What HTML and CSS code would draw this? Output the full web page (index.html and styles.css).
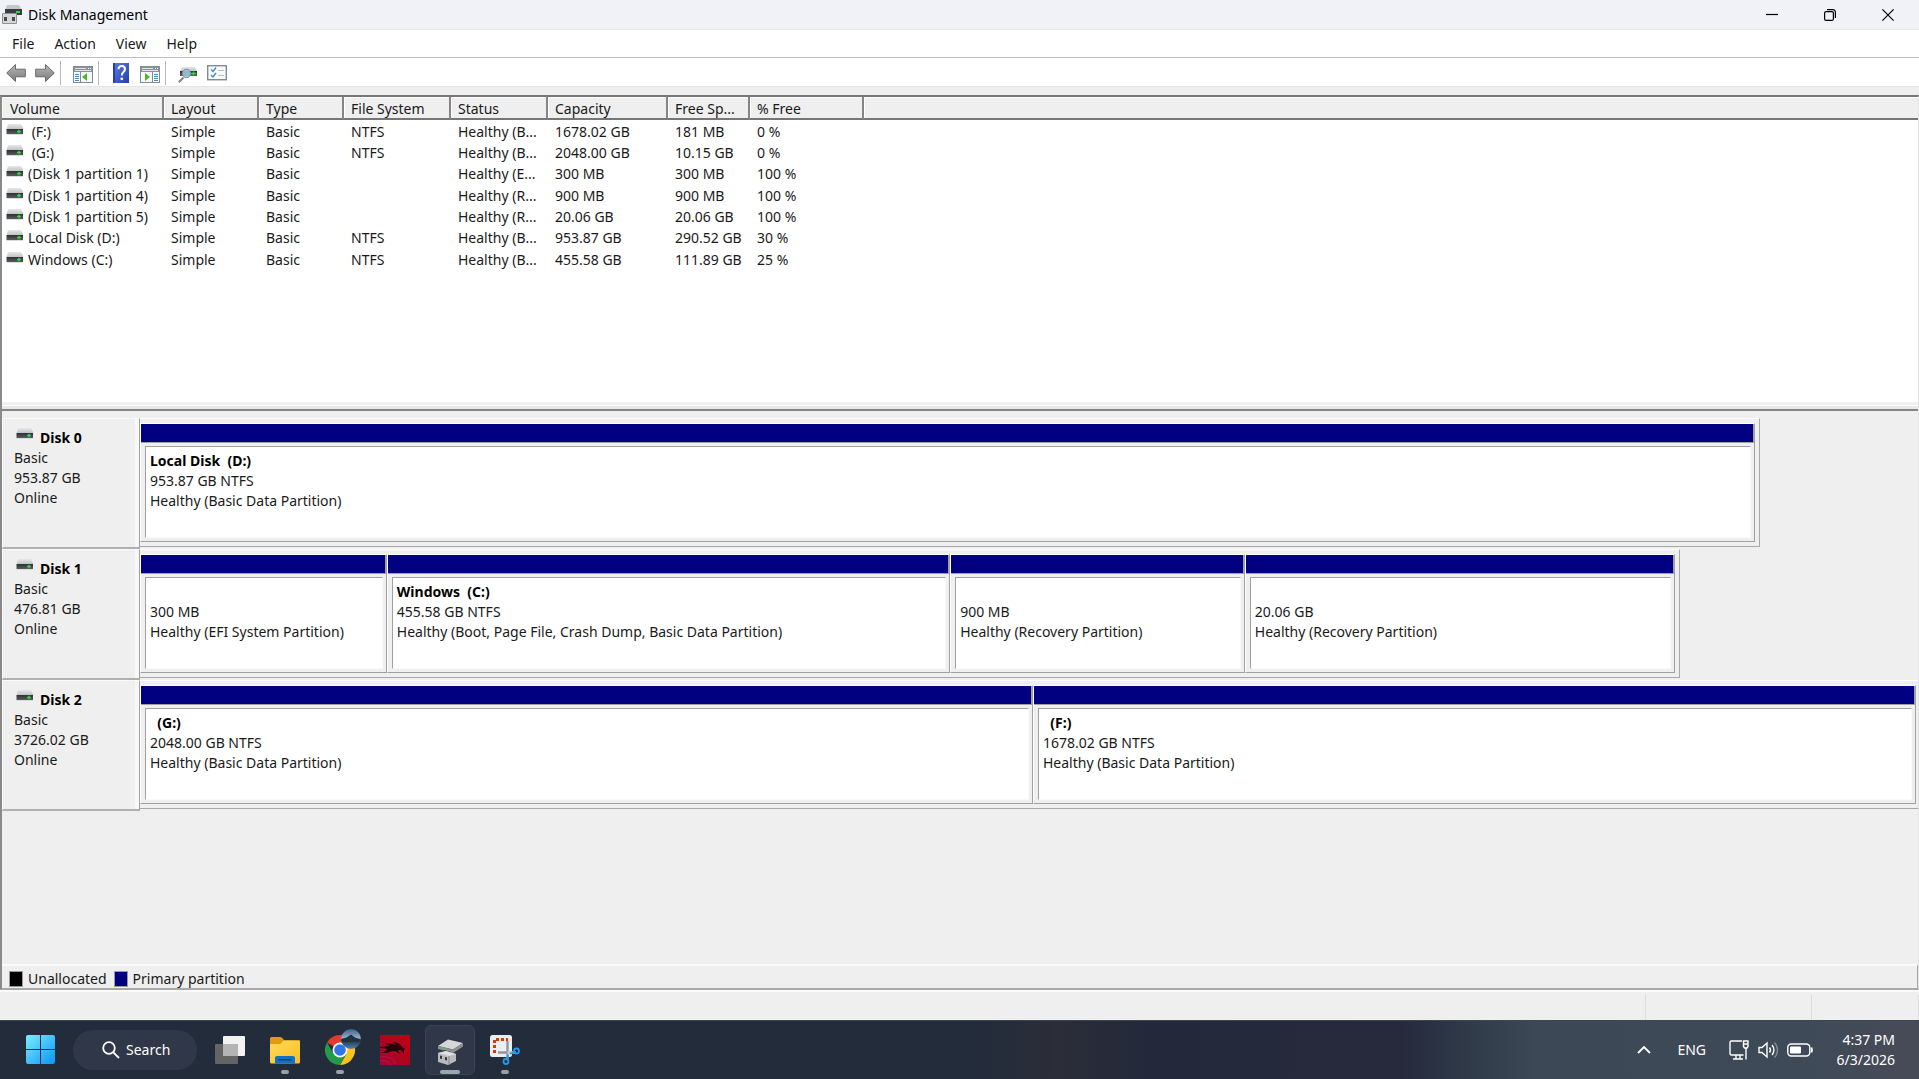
FILE: index.html
```
<!DOCTYPE html>
<html lang="en">
<head>
<meta charset="utf-8">
<title>Disk Management</title>
<link rel="stylesheet" href="styles.css">
</head>
<body>
<svg class="defs" aria-hidden="true">
  <defs>
    <linearGradient id="lid" x1="0" y1="0" x2="0" y2="1"><stop offset="0" stop-color="#e6e8ea"/><stop offset="1" stop-color="#c0c3c7"/></linearGradient>
    <linearGradient id="face" x1="0" y1="0" x2="0" y2="1"><stop offset="0" stop-color="#2e3133"/><stop offset="1" stop-color="#5a5d60"/></linearGradient>
    <linearGradient id="arrow" x1="0" y1="0" x2="0" y2="1"><stop offset="0" stop-color="#b5b5b5"/><stop offset="1" stop-color="#7c7c7c"/></linearGradient>
    <linearGradient id="help" x1="0" y1="0" x2="1" y2="1"><stop offset="0" stop-color="#5a7ee0"/><stop offset="1" stop-color="#2540a8"/></linearGradient>
    <linearGradient id="win" x1="0" y1="0" x2="1" y2="1"><stop offset="0" stop-color="#7cecff"/><stop offset="1" stop-color="#0a95f8"/></linearGradient>
    <linearGradient id="folder" x1="0" y1="0" x2="1" y2="1"><stop offset="0" stop-color="#ffd95a"/><stop offset="1" stop-color="#f9bf24"/></linearGradient>
    <linearGradient id="red" x1="0" y1="1" x2="1" y2="0"><stop offset="0" stop-color="#9c0840"/><stop offset=".5" stop-color="#b0041c"/><stop offset="1" stop-color="#c40012"/></linearGradient>
    <linearGradient id="sky" x1="0" y1="0" x2="0" y2="1"><stop offset="0" stop-color="#3f5f88"/><stop offset=".45" stop-color="#8fb0cc"/><stop offset=".55" stop-color="#1c3340"/><stop offset="1" stop-color="#587fae"/></linearGradient>
    <symbol id="drive" viewBox="0 0 18 11">
      <path d="M2 0h13l2.500 5H.5z" fill="url(#lid)"/>
      <rect x=".5" y="5" width="16.500" height="5" fill="url(#face)"/>
      <path d="M.5 10h16.500v1H.5z" fill="#d9dbdd"/>
      <path d="M11 7.500h4M13 5.800v3.400" stroke="#35d43c" stroke-width="1.400"/>
    </symbol>
  </defs>
</svg>

<header class="titlebar">
  <svg class="app-icon" viewBox="0 0 20 20" aria-hidden="true">
    <path d="M5 0h12l3 5H3z" fill="#c5c8cb"/><rect x="3" y="4" width="17" height="6" fill="#3a3d40"/><path d="M14 7h4" stroke="#35d43c" stroke-width="2"/>
    <rect x="0" y="8" width="15" height="11" rx="1" fill="#8e9092"/><rect x="1" y="9" width="13" height="9" fill="#d5d6d7"/><path d="M2 12h3v4H2zM10 12h3v4h-3z" fill="#4b4c4d"/>
  </svg>
  <h1>Disk Management</h1>
  <div class="window-controls">
    <button type="button" aria-label="Minimize"><svg viewBox="0 0 12 12"><path d="M0 5.500h12"/></svg></button>
    <button type="button" aria-label="Restore"><svg viewBox="0 0 12 12"><rect x=".6" y="2.600" width="8.800" height="8.800" rx="1.500"/><path d="M3 .6h6a2.400 2.400 0 0 1 2.400 2.400v6"/></svg></button>
    <button type="button" aria-label="Close"><svg viewBox="0 0 12 12"><path d="M.4.4l11.200 11.200M11.600.4L.4 11.600"/></svg></button>
  </div>
</header>

<nav class="menubar">
  <button type="button">File</button>
  <button type="button">Action</button>
  <button type="button">View</button>
  <button type="button">Help</button>
</nav>

<div class="toolbar">
  <button type="button" aria-label="Back"><svg viewBox="0 0 20 20"><path d="M.7 10L9.500 1.500v4.700h9.800v7.600H9.500v4.700z" fill="url(#arrow)" stroke="#6a6a6a"/></svg></button>
  <button type="button" aria-label="Forward"><svg viewBox="0 0 20 20"><path d="M19.300 10L10.500 1.500v4.700H.7v7.600h9.800v4.700z" fill="url(#arrow)" stroke="#6a6a6a"/></svg></button>
  <span class="divider"></span>
  <button type="button" aria-label="Show console tree"><svg viewBox="0 0 20 20"><rect x=".5" y="3.500" width="19" height="16" fill="#f7f8f9" stroke="#848b93"/><path d="M1 4h18v5H1z" fill="#8a929b"/><path d="M2 5.500h11M2 7.500h16" stroke="#dfe3e7"/><path d="M15 5.500h3" stroke="#fff" stroke-dasharray="1 1"/><path d="M2 11.500h4M2 13.500h4M2 15.500h4M2 17.500h4" stroke="#4f86c0"/><path d="M7.500 9v10" stroke="#848b93"/><path d="M14 10v8l-5-4z" fill="#4db52c"/></svg></button>
  <span class="divider"></span>
  <button type="button" aria-label="Help topics"><svg viewBox="0 0 20 20"><rect x="2" width="16" height="20" fill="url(#help)"/><path d="M2 0h2v20H2z" fill="#2440a0"/><path d="M7.500 6.200C7.500 1.800 14 2 14 6.200c0 3-3.200 2.800-3.200 6.300" fill="none" stroke="#fff" stroke-width="2"/><circle cx="10.800" cy="15.800" r="1.400" fill="#fff"/></svg></button>
  <button type="button" aria-label="Show action pane"><svg viewBox="0 0 20 20"><rect x=".5" y="3.500" width="19" height="16" fill="#f7f8f9" stroke="#848b93"/><path d="M1 4h18v5H1z" fill="#8a929b"/><path d="M2 5.500h11M2 7.500h16" stroke="#dfe3e7"/><path d="M15 5.500h3" stroke="#fff" stroke-dasharray="1 1"/><path d="M14 11.500h4M14 13.500h4M14 15.500h4M14 17.500h4" stroke="#4f86c0"/><path d="M12.500 9v10" stroke="#848b93"/><path d="M5 10v8l5-4z" fill="#4db52c"/></svg></button>
  <span class="divider"></span>
  <button type="button" aria-label="Rescan disks"><svg viewBox="0 0 20 20"><path d="M4 4h13l2 4H2z" fill="url(#lid)"/><path d="M2 8h17v5H2z" fill="url(#face)"/><path d="M13 10.500h5M15.500 8.500v4" stroke="#35d43c" stroke-width="1.500"/><path d="M5.500 14.500L.8 19.200" stroke="#7d8791" stroke-width="2"/><circle cx="8.500" cy="10.500" r="4.200" fill="#9cc4dc" fill-opacity=".9" stroke="#6f8fa3"/></svg></button>
  <button type="button" aria-label="Settings"><svg viewBox="0 0 20 20"><rect x=".7" y="2.700" width="18.600" height="14" fill="#fafbfc" stroke="#828a92" stroke-width="1.400"/><path d="M4 6.500l2 2 3-4M4 12l2 2 3-4" fill="none" stroke="#3c8fd6" stroke-width="1.400"/><path d="M11 7.500h6M11 12.500h6" stroke="#b9bdc2"/></svg></button>
</div>

<main class="workspace">
  <section class="volumes">
    <table>
      <colgroup><col class="c-volume"><col class="c-layout"><col class="c-type"><col class="c-fs"><col class="c-status"><col class="c-capacity"><col class="c-free"><col class="c-percent"><col></colgroup>
      <thead><tr><th>Volume</th><th>Layout</th><th>Type</th><th>File System</th><th>Status</th><th>Capacity</th><th>Free Sp...</th><th>% Free</th><th></th></tr></thead>
      <tbody>
        <tr><td><svg class="drive"><use href="#drive"/></svg>&nbsp;(F:)</td><td>Simple</td><td>Basic</td><td>NTFS</td><td>Healthy (B...</td><td>1678.02 GB</td><td>181 MB</td><td>0 %</td><td></td></tr>
        <tr><td><svg class="drive"><use href="#drive"/></svg>&nbsp;(G:)</td><td>Simple</td><td>Basic</td><td>NTFS</td><td>Healthy (B...</td><td>2048.00 GB</td><td>10.15 GB</td><td>0 %</td><td></td></tr>
        <tr><td><svg class="drive"><use href="#drive"/></svg>(Disk 1 partition 1)</td><td>Simple</td><td>Basic</td><td></td><td>Healthy (E...</td><td>300 MB</td><td>300 MB</td><td>100 %</td><td></td></tr>
        <tr><td><svg class="drive"><use href="#drive"/></svg>(Disk 1 partition 4)</td><td>Simple</td><td>Basic</td><td></td><td>Healthy (R...</td><td>900 MB</td><td>900 MB</td><td>100 %</td><td></td></tr>
        <tr><td><svg class="drive"><use href="#drive"/></svg>(Disk 1 partition 5)</td><td>Simple</td><td>Basic</td><td></td><td>Healthy (R...</td><td>20.06 GB</td><td>20.06 GB</td><td>100 %</td><td></td></tr>
        <tr><td><svg class="drive"><use href="#drive"/></svg>Local Disk (D:)</td><td>Simple</td><td>Basic</td><td>NTFS</td><td>Healthy (B...</td><td>953.87 GB</td><td>290.52 GB</td><td>30 %</td><td></td></tr>
        <tr><td><svg class="drive"><use href="#drive"/></svg>Windows (C:)</td><td>Simple</td><td>Basic</td><td>NTFS</td><td>Healthy (B...</td><td>455.58 GB</td><td>111.89 GB</td><td>25 %</td><td></td></tr>
      </tbody>
    </table>
  </section>
  <div class="splitter"></div>

  <section class="disks">
    <article class="disk">
      <div class="disk-label"><h2><svg class="drive"><use href="#drive"/></svg>Disk 0</h2><p>Basic</p><p>953.87 GB</p><p>Online</p></div>
      <div class="map" style="width:91.1%">
        <div class="partition"><div class="bar"></div><div class="info"><h3>Local Disk &nbsp;(D:)</h3><p>953.87 GB NTFS</p><p>Healthy (Basic Data Partition)</p></div></div>
      </div>
    </article>
    <article class="disk">
      <div class="disk-label"><h2><svg class="drive"><use href="#drive"/></svg>Disk 1</h2><p>Basic</p><p>476.81 GB</p><p>Online</p></div>
      <div class="map" style="width:86.6%">
        <div class="partition" style="flex-grow:246"><div class="bar"></div><div class="info"><h3></h3><p>300 MB</p><p>Healthy (EFI System Partition)</p></div></div>
        <div class="partition" style="flex-grow:564"><div class="bar"></div><div class="info"><h3>Windows &nbsp;(C:)</h3><p>455.58 GB NTFS</p><p>Healthy (Boot, Page File, Crash Dump, Basic Data Partition)</p></div></div>
        <div class="partition" style="flex-grow:294"><div class="bar"></div><div class="info"><h3></h3><p>900 MB</p><p>Healthy (Recovery Partition)</p></div></div>
        <div class="partition" style="flex-grow:430"><div class="bar"></div><div class="info"><h3></h3><p>20.06 GB</p><p>Healthy (Recovery Partition)</p></div></div>
      </div>
    </article>
    <article class="disk">
      <div class="disk-label"><h2><svg class="drive"><use href="#drive"/></svg>Disk 2</h2><p>Basic</p><p>3726.02 GB</p><p>Online</p></div>
      <div class="map full">
        <div class="partition" style="flex-grow:893"><div class="bar"></div><div class="info"><h3>&nbsp; (G:)</h3><p>2048.00 GB NTFS</p><p>Healthy (Basic Data Partition)</p></div></div>
        <div class="partition" style="flex-grow:883"><div class="bar"></div><div class="info"><h3>&nbsp; (F:)</h3><p>1678.02 GB NTFS</p><p>Healthy (Basic Data Partition)</p></div></div>
      </div>
    </article>
  </section>

  <div class="legend">
    <span class="swatch unallocated"></span><span>Unallocated</span>
    <span class="swatch primary"></span><span>Primary partition</span>
  </div>
</main>

<div class="statusbar"><span></span><span></span><span></span></div>

<footer class="taskbar">
  <button type="button" class="start" aria-label="Start"><svg viewBox="0 0 30 30"><path d="M2 0h12v14H0V2a2 2 0 0 1 2-2zM15 0h12a2 2 0 0 1 2 2v12H15zM0 15h14v14H2a2 2 0 0 1-2-2zM15 15h14v12a2 2 0 0 1-2 2H15z" fill="url(#win)"/></svg></button>
  <button type="button" class="search"><svg viewBox="0 0 18 18"><circle cx="7" cy="7" r="5.800"/><path d="M11.300 11.300l5.700 5.700"/></svg>Search</button>
  <div class="apps">
    <button type="button" aria-label="Task view"><svg viewBox="0 0 30 30"><rect x="8" y="1" width="22" height="20" rx="1" fill="#f2f2f2"/><rect y="9" width="23" height="20" rx="1" fill="#646464"/><path d="M8 9h14a1 1 0 0 1 1 1v11H8z" fill="#b4b4b4"/></svg></button>
    <button type="button" class="running" aria-label="File Explorer"><svg viewBox="0 0 30 30"><path d="M0 3.500A1.500 1.500 0 0 1 1.500 2h8.700a3 3 0 0 1 2 1l2 2.200H30V12H0z" fill="#e09c0c"/><path d="M0 9h10.500l3-3.500h15A1.500 1.500 0 0 1 30 7v20a1.500 1.500 0 0 1-1.500 1.500h-27A1.500 1.500 0 0 1 0 27z" fill="url(#folder)"/><path d="M5 28.500V23a2 2 0 0 1 2-2h16a2 2 0 0 1 2 2v5.500z" fill="#0f72c4"/><path d="M8.500 24.800h13" stroke="#0a3f78" stroke-width="1.400"/></svg></button>
    <button type="button" class="running" aria-label="Google Chrome"><svg viewBox="0 0 30 30"><path d="M15 15L2 7.500A15 15 0 0 1 28 7.500H15z" fill="#e33b2e"/><path d="M15 15v-7.500h13A15 15 0 0 1 15 30l6.500-11.200z" fill="#fcc31e"/><path d="M2 7.500l6.500 11.300L15 22.500l6-3L15 30A15 15 0 0 1 2 7.500z" fill="#239a48"/><circle cx="15" cy="15" r="7.500" fill="#fff"/><circle cx="15" cy="15" r="5.800" fill="#2f74ea"/><circle cx="26" cy="4" r="10" fill="url(#sky)"/><path d="M16.500 4l5-1.500 4.500-3 4 3 5.500 2-2 2.500H19z" fill="#1d3440"/></svg></button>
    <button type="button" aria-label="Kali Linux"><svg viewBox="0 0 30 30"><path d="M0 0h30v30H0z" fill="url(#red)"/><path d="M0 12c4 0 6-2 10-1-2-2-4-2-6-2 5-1 9 0 12 1l-3-3c5 0 8 3 9 5l3 2-1 1 0 4-3-4-3 0 2 4-5-3c-4 0-6 1-8 2l-7 0c4-1 6-2 7-4-2-1-4-1-7-1z" fill="#25040c"/><path d="M0 22c8-1 13 1 16 7M0 26c6-1 9 1 11 4" fill="none" stroke="#d01038" stroke-width=".8"/></svg></button>
    <button type="button" class="running active" aria-label="Disk Management"><svg viewBox="0 0 30 30"><path d="M3 11L13 4.500 28 8 18 14.500z" fill="#d6d6d6"/><path d="M3 11v3l15 4 10-6.500V8l-10 6.500z" fill="#8d8f90"/><path d="M9 15l7 2v3l-7-2z" fill="#303230"/><circle cx="9" cy="13.500" r="1" fill="#35d43c"/><path d="M3 18l8-2 10 3v7l-8 4-10-3z" fill="#b9babb"/><path d="M3 18l8-2 10 3-7 2z" fill="#dedede"/><path d="M14 21v9" stroke="#8a8b8c"/><path d="M5 20.500l2 .5v3l-2-.5zM10 22l2 .5v3l-2-.5z" fill="#333"/></svg></button>
    <button type="button" class="running" aria-label="Snipping Tool"><svg viewBox="0 0 30 30"><rect width="22" height="22" rx="2.500" fill="#eceef3"/><path d="M4.500 18V4.500H18" fill="none" stroke="#d83b01" stroke-width="3" stroke-dasharray="3 2"/><path d="M17.500 6v18M8 17.500h18" stroke="#8f979e" stroke-width="2.400"/><path d="M17.500 17.500h5" stroke="#c4c9ce" stroke-width="3"/><circle cx="26.500" cy="16" r="2.500" fill="none" stroke="#1f9cf0" stroke-width="1.800"/><circle cx="16" cy="26.500" r="2.500" fill="none" stroke="#1f9cf0" stroke-width="1.800"/><path d="M20 19l5-2.500M17 24l1-4" stroke="#1f9cf0" stroke-width="1.800"/></svg></button>
  </div>
  <div class="tray">
    <button type="button" class="chevron" aria-label="Show hidden icons"><svg viewBox="0 0 14 20"><path d="M1 13l6-6 6 6" stroke-width="1.800"/></svg></button>
    <button type="button" class="lang">ENG</button>
    <button type="button" class="quick" aria-label="Network, volume and battery">
      <svg class="net" viewBox="0 0 20 20"><path d="M13 1H2.500A1.500 1.500 0 0 0 1 2.500v11A1.500 1.500 0 0 0 2.500 15h12M4 19h10M7 15v4M11 15v4M14.500 1h4.500v5.500l-1 1.500h-2.500l-1-1.500zM14.500 4h4.500M17 8v11.500"/></svg>
      <svg class="vol" viewBox="0 0 20 20"><path d="M1 7.500h3L9 3v14l-5-4.500H1z"/><path d="M11.500 7.500a4 4 0 0 1 0 5M14 5a7.500 7.500 0 0 1 0 10"/><path d="M16.500 2.500a11 11 0 0 1 0 15" opacity=".35"/></svg>
      <svg class="bat" viewBox="0 0 26 20"><rect x=".8" y="4" width="22" height="12" rx="3.500"/><path d="M24.500 7.500q1 2.500 0 5" stroke-width="1.800"/><rect x="3" y="6.500" width="11" height="7" rx="1" fill="#fff" stroke="none"/></svg>
    </button>
    <button type="button" class="clock"><span>4:37 PM</span><span>6/3/2026</span></button>
  </div>
</footer>
</body>
</html>
```
FILE: styles.css
```
* { box-sizing: border-box; }

body {
  margin: 0;
  min-height: 100vh;
  display: flex;
  flex-direction: column;
  background: #efefef;
  color: #1a1a1a;
  font: 14px/20px "Noto Sans", "Open Sans", sans-serif;
}

h1, h2, h3, p { margin: 0; font-size: 14px; }
h1 { font-weight: 400; }
svg { display: block; overflow: visible; }
.defs { position: absolute; width: 0; height: 0; }

button {
  padding: 0;
  border: 0;
  background: none;
  color: inherit;
  font: inherit;
}

/* Title bar */
.titlebar {
  display: flex;
  align-items: center;
  height: 30px;
  padding: 0 2px;
  border-bottom: 1px solid #e8e8ea;
  background: #f0f2f8;
}
.titlebar h1 { margin-left: 6px; color: #000; }
.app-icon { width: 20px; height: 20px; }
.window-controls { display: flex; margin-left: auto; }
.window-controls button {
  display: grid;
  place-items: center;
  width: 58px;
  height: 29px;
}
.window-controls svg {
  width: 12px;
  height: 12px;
  fill: none;
  stroke: #000;
  stroke-width: 1.2;
}

/* Menu and toolbar */
.menubar {
  display: flex;
  gap: 20px;
  height: 28px;
  padding: 0 12px;
  border-bottom: 1px solid #bfbfc2;
  background: #fff;
}
.toolbar {
  display: flex;
  align-items: center;
  height: 29px;
  padding: 2px 0 0 1px;
  border-bottom: 1px solid #e4e4e4;
  background: #fff;
}
.toolbar button {
  display: grid;
  place-items: center;
  width: 29px;
  height: 26px;
}
.toolbar svg { width: 20px; height: 20px; }
.divider {
  width: 1px;
  height: 24px;
  margin: 0 7px 0 1px;
  background: #b8b8b8;
}

/* Workspace */
.workspace {
  flex: 1;
  display: flex;
  flex-direction: column;
  margin-top: 8px;
  border-top: 2px solid #767676;
  border-left: 2px solid #8a8a8a;
  border-right: 1px solid #e3e3e3;
  border-bottom: 2px solid #a8a8a8;
}
.volumes { flex: 0 0 305px; background: #fff; }
table {
  width: 100%;
  table-layout: fixed;
  border-collapse: separate;
  border-spacing: 0;
}
.c-volume { width: 162px; }
.c-layout { width: 95px; }
.c-type { width: 85px; }
.c-fs { width: 107px; }
.c-status { width: 97px; }
.c-capacity { width: 120px; }
.c-free { width: 82px; }
.c-percent { width: 114px; }
th, td {
  padding: 0 0 0 7px;
  text-align: left;
  font-weight: 400;
  white-space: nowrap;
}
th {
  height: 23px;
  padding-top: 3px;
  line-height: 18px;
  border-right: 2px solid #858585;
  border-bottom: 2px solid #767676;
  background: #efefef;
  box-shadow: inset 1px 1px #fff;
}
th:first-child { padding-left: 8px; }
th:last-child { border-right: 0; }
td { height: 21px; line-height: 21px; }
tbody tr:nth-child(3n+1) td { height: 22px; }
td:first-child { padding-left: 4px; }
.drive { width: 18px; height: 11px; }
td .drive { float: left; margin: 3px 4px 0 0; }

.splitter {
  height: 9px;
  border-top: 3px solid #f0f0f0;
  border-bottom: 2px solid #858585;
  background: #e8e8e8;
  box-shadow: inset 0 1px #fff;
}

/* Disk map */
.disks { flex: 1; padding-top: 7px; }
.disk {
  display: grid;
  grid-template-columns: 138px 1fr;
  height: 131px;
}
.disk-label {
  height: 131px;
  padding: 9px 0 0 11px;
  border: 1px solid #fafafa;
  border-right: 1px solid #a0a0a0;
  border-bottom: 2px solid #b0b0b0;
  box-shadow: inset -4px 0 #f8f8f8;
}
.disk-label h2 {
  display: flex;
  gap: 6px;
  padding-left: 2px;
  color: #000;
}
.map {
  display: flex;
  height: 129px;
  padding: 4px 4px 4px 0;
  border-top: 1px solid #fff;
  border-right: 1px solid #a8a8a8;
  border-bottom: 1px solid #a8a8a8;
}
.map.full { padding-right: 2px; border-right: 0; }
.partition {
  flex: 1 1 0;
  min-width: 0;
  display: flex;
  flex-direction: column;
  border: 1px solid #fff;
  border-right: 1px solid #a0a0a0;
  border-bottom: 1px solid #a0a0a0;
}
.bar {
  height: 19px;
  border-right: 1px solid #a0a0a0;
  border-bottom: 1px solid #a0a0a0;
  background: #000080;
}
.info {
  flex: 1;
  margin: 3px 3px 3px 4px;
  padding: 4px 0 0 4px;
  overflow: hidden;
  border: 1px solid #a0a0a0;
  border-right-color: #fafafa;
  border-bottom-color: #fafafa;
  background: #fff;
  white-space: nowrap;
}
.info h3 { height: 20px; color: #000; }

/* Legend and status bar */
.legend {
  display: flex;
  align-items: center;
  height: 24px;
  padding: 3px 0 0 7px;
  border-top: 2px solid #fafafa;
  border-right: 1px solid #a8a8a8;
}
.swatch {
  width: 14px;
  height: 16px;
  margin-right: 5px;
  border: 1px solid #9a9a9a;
}
.unallocated { background: #000; }
.primary { margin-left: 7px; background: #000080; }
.statusbar {
  display: flex;
  height: 30px;
  padding-top: 3px;
  border-top: 2px solid #fafafa;
}
.statusbar span { border-right: 1px solid #dcdcdc; }
.statusbar span:nth-child(1) { flex: 1; }
.statusbar span:nth-child(2) { width: 166px; }
.statusbar span:nth-child(3) { width: 107px; }

/* Taskbar */
.taskbar {
  display: flex;
  align-items: center;
  height: 59px;
  padding: 0 24px 0 26px;
  border-top: 1px solid #3b4753;
  background: linear-gradient(90deg, #232c3b 0%, #232c3b 51%, #2b2d38 55%, #23293a 60%, #262a3c 73%, #2e3847 76%, #3c4855 80%, #3e4a58 94%, #484b57 100%);
  color: #fff;
}
.start svg { width: 30px; height: 30px; }
.search {
  display: flex;
  align-items: center;
  gap: 6px;
  width: 124px;
  height: 40px;
  margin-left: 17px;
  padding-left: 29px;
  border-radius: 20px;
  background: #303748;
}
.search svg {
  width: 18px;
  height: 18px;
  fill: none;
  stroke: #fff;
  stroke-width: 1.8;
}
.apps { display: flex; gap: 5px; margin-left: 8px; }
.apps button {
  position: relative;
  display: grid;
  place-items: center;
  width: 50px;
  height: 50px;
  border-radius: 6px;
}
.apps svg { width: 30px; height: 30px; }
.running::after {
  content: "";
  position: absolute;
  bottom: 1px;
  left: 21px;
  width: 8px;
  height: 4px;
  border-radius: 2px;
  background: #9a9fa8;
}
.apps .active {
  border: 1px solid #3b4252;
  background: #303748;
}
.active::after { bottom: 0; left: 14px; width: 20px; background: #98a9ad; }
.tray { display: flex; align-items: center; margin-left: auto; }
.tray svg {
  height: 20px;
  fill: none;
  stroke: #fff;
  stroke-width: 1.4;
}
.chevron svg { width: 14px; }
.lang { margin-left: 26px; }
.quick { display: flex; gap: 9px; width: 86px; margin-left: 23px; }
.net, .vol { width: 20px; }
.bat { width: 26px; }
.clock {
  display: flex;
  flex-direction: column;
  width: 80px;
  text-align: right;
}
```
